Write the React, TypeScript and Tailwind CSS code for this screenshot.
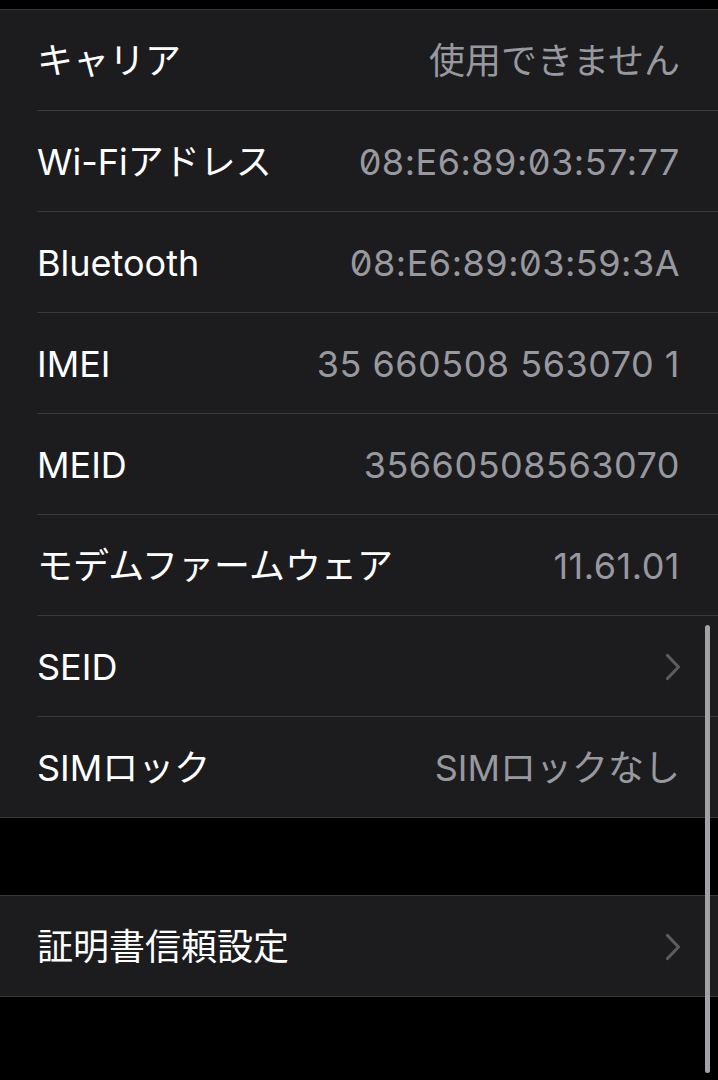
type Row = { label: string; value?: string; chevron?: boolean; mac?: boolean; num?: boolean }

const ROWS: Row[] = [
  { label: 'キャリア', value: '使用できません' },
  { label: 'Wi-Fiアドレス', value: '08:E6:89:03:57:77', mac: true, num: true },
  { label: 'Bluetooth', value: '08:E6:89:03:59:3A', mac: true, num: true },
  { label: 'IMEI', value: '35 660508 563070 1', num: true },
  { label: 'MEID', value: '35660508563070', num: true },
  { label: 'モデムファームウェア', value: '11.61.01', num: true },
  { label: 'SEID', chevron: true },
  { label: 'SIMロック', value: 'SIMロックなし' },
]

const FONT = "font-['Inter','Noto_Sans_CJK_JP',sans-serif]"

function Chevron() {
  return (
    <svg width="16" height="28" viewBox="0 0 16 28" fill="none" className="mr-[-1px]">
      <path d="M2.5 2.5 L13.5 14 L2.5 25.5" stroke="#5b5b60" strokeWidth="3.2" strokeLinecap="round" strokeLinejoin="round" />
    </svg>
  )
}

function SettingsRow({ row, last }: { row: Row; last: boolean }) {
  return (
    <div className="pl-[37px]">
      <div
        className={`flex items-center justify-between pr-[38px] pt-[2px] ${
          last ? 'h-[100px]' : 'h-[101px] border-b border-[#38383a]'
        }`}
      >
        <span className="text-[36px] leading-none text-white">{row.label}</span>
        {row.value && (
          <span
            className={`text-[36px] leading-none text-[#98989f] ${row.mac ? 'slashed-zero' : ''} ${
              row.num ? 'tracking-[0.5px]' : ''
            }`}
          >
            {row.value}
          </span>
        )}
        {row.chevron && <Chevron />}
      </div>
    </div>
  )
}

export default function App() {
  return (
    <div className={`relative h-[1080px] w-[718px] overflow-hidden bg-black ${FONT}`}>
      <div className="h-[9px]" />
      <div className="border-y border-[#38383a] bg-[#1c1c1e]">
        {ROWS.map((r, i) => (
          <SettingsRow key={r.label} row={r} last={i === ROWS.length - 1} />
        ))}
      </div>
      <div className="h-[77px]" />
      <div className="border-y border-[#38383a] bg-[#1c1c1e]">
        <SettingsRow row={{ label: '証明書信頼設定', chevron: true }} last />
      </div>

      {/* scroll indicator */}
      <div className="absolute right-[8px] top-[625px] h-[448px] w-[5px] rounded-full bg-[#a2a2a6]" />
    </div>
  )
}
